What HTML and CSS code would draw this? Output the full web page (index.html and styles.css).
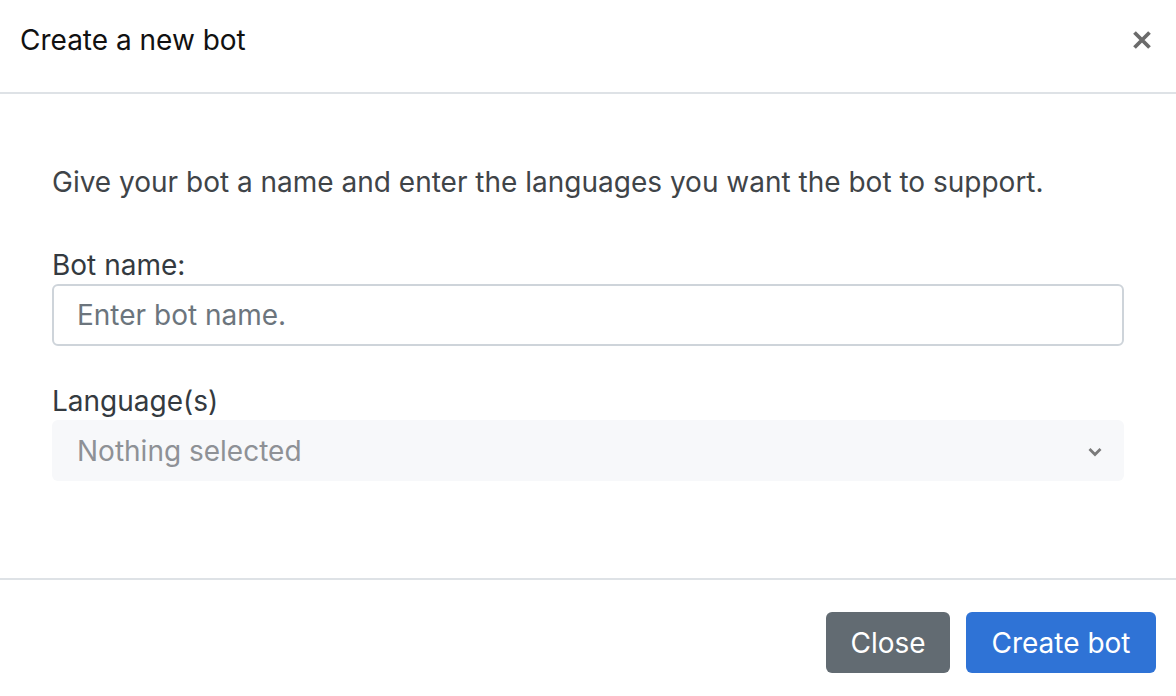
FILE: index.html
```html
<!DOCTYPE html>
<html lang="en">
<head>
<meta charset="utf-8">
<title>Create a new bot</title>
<link rel="stylesheet" href="styles.css">
</head>
<body>
<div class="modal">
  <div class="modal-header">
    <h5 class="modal-title">Create a new bot</h5>
    <button class="btn-x" type="button" aria-label="Close">
      <svg width="20" height="20" viewBox="0 0 20 20"><path d="M2.5 2.5L17.5 17.5M17.5 2.5L2.5 17.5" stroke="#6b6b6b" stroke-width="3.8" stroke-linecap="butt"/></svg>
    </button>
  </div>
  <div class="modal-body">
    <p class="intro">Give your bot a name and enter the languages you want the bot to support.</p>
    <label class="label" for="botname">Bot name:</label>
    <input class="input" id="botname" type="text" placeholder="Enter bot name.">
    <div class="label label-lang">Language(s)</div>
    <div class="select">
      <span class="select-text">Nothing selected</span>
      <svg class="chev" width="16" height="10" viewBox="0 0 16 10"><path d="M2.5 2L8 7.5L13.5 2" fill="none" stroke="#7a7a7a" stroke-width="2.8"/></svg>
    </div>
  </div>
  <div class="modal-footer">
    <button class="btn btn-secondary" type="button">Close</button>
    <button class="btn btn-primary" type="button">Create bot</button>
  </div>
</div>
</body>
</html>
```

FILE: styles.css
```css
* { box-sizing: border-box; }
html, body { margin: 0; padding: 0; background: #fff; }
body {
  font-family: Inter, "Noto Sans", "Liberation Sans", sans-serif;
  color: #212529;
  width: 1176px;
  height: 696px;
  overflow: hidden;
}
.modal { width: 1176px; }
.modal-header {
  height: 94px;
  border-bottom: 2px solid #dee2e6;
  display: flex;
  align-items: center;
  justify-content: space-between;
  padding: 0 20px 12px 20px;
}
.modal-title {
  margin: 0;
  font-size: 28px;
  font-weight: 400;
  color: #111;
  line-height: 36px;
}
.btn-x {
  border: 0;
  background: transparent;
  padding: 0;
  width: 20px;
  height: 20px;
  display: flex;
  margin-right: 4px;
}
.modal-body {
  padding: 0 52px;
  height: 484px;
}
.intro {
  margin: 0;
  padding-top: 70px;
  font-size: 28px;
  line-height: 36px;
  color: #3f4448;
}
.label {
  display: block;
  font-size: 28px;
  line-height: 36px;
  color: #343a40;
  margin-top: 47px;
}
.label-lang { margin-top: 37px; }
.input {
  display: block;
  width: 100%;
  height: 62px;
  margin-top: 1px;
  border: 2px solid #ced4da;
  border-radius: 6px;
  padding: 0 23px;
  font-family: inherit;
  font-size: 28px;
  color: #495057;
  background: #fff;
}
.input::placeholder { color: #6c757d; }
.select {
  margin-top: 1px;
  height: 61px;
  background: #f7f8fa;
  border-radius: 6px;
  display: flex;
  align-items: center;
  justify-content: space-between;
  padding: 0 21px 0 25px;
}
.select-text {
  font-size: 28px;
  color: #8e9196;
}
.chev { display: block; margin-top: 2px; }
.modal-footer {
  border-top: 2px solid #dee2e6;
  display: flex;
  justify-content: flex-end;
  gap: 16px;
  padding: 32px 20px 0 20px;
}
.btn {
  height: 61px;
  border: 0;
  border-radius: 6px;
  font-family: inherit;
  font-size: 28px;
  color: #fff;
  padding: 0;
}
.btn-secondary { background: #626b72; width: 124px; }
.btn-primary { background: #2f73d6; width: 190px; }
```
